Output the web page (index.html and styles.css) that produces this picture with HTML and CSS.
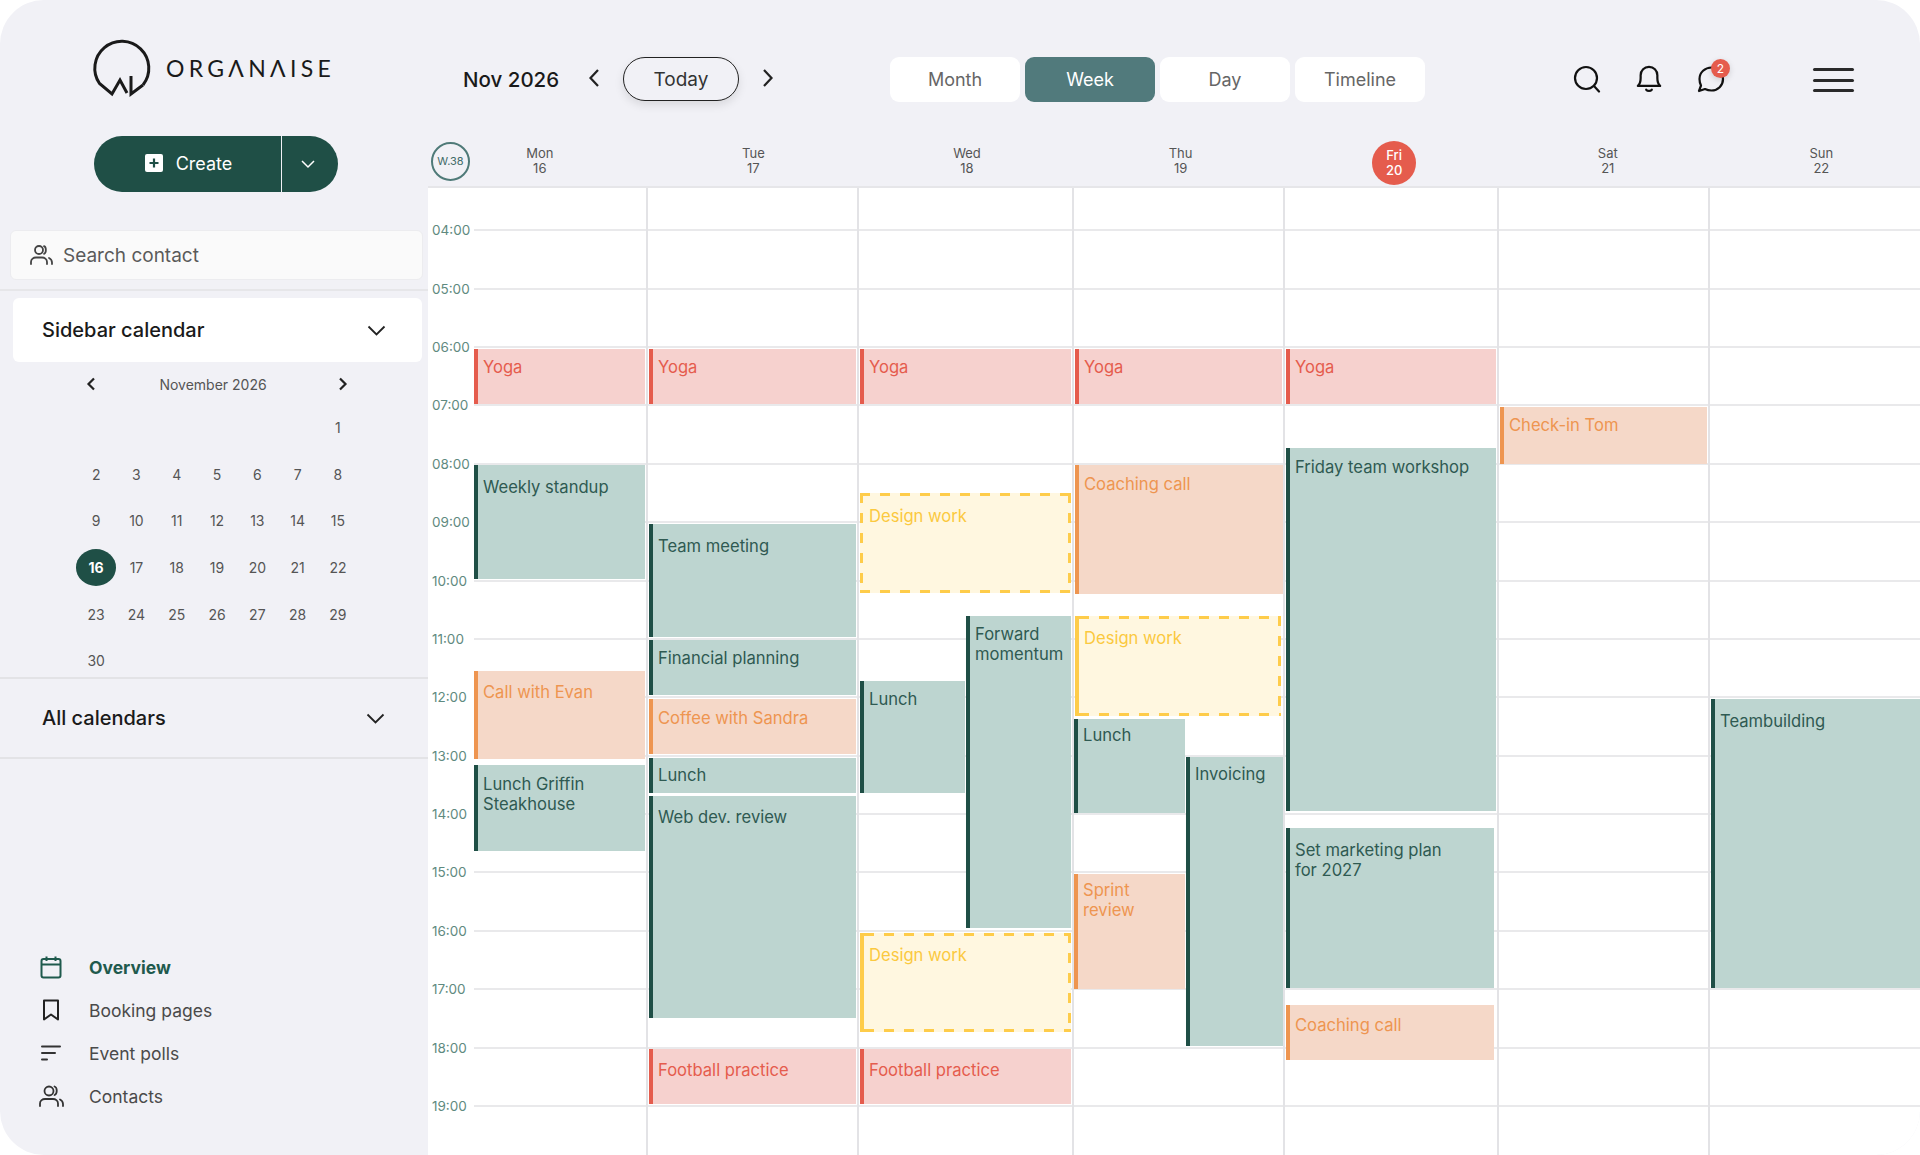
FILE: index.html
```html
<!DOCTYPE html>
<html>
<head>
<meta charset="utf-8"/>
<title>Organaise - Calendar</title>
<link rel="stylesheet" href="styles.css">
</head>
<body>
<div class="app">

	<!-- Left column -->
	<aside class="sidebar">
		<div class="logo">
			<svg class="logo-mark" width="60" height="60" viewBox="92 38 60 60" fill="none" stroke="#1a1a1a" stroke-width="3">
				<path d="M143 85 A27 27 0 1 0 99.500 83.500 L112 94 L120 80 L127 93"/>
				<path d="M131 76 L131 94 L143 85"/>
			</svg>
			<span class="logo-name" aria-label="Organaise">ORGΛNΛISE</span>
		</div>

		<div class="create">
			<button class="create-main">
				<svg width="18" height="18" viewBox="0 0 18 18"><rect width="18" height="18" rx="2" fill="#fff"/><path d="M9 4.500V13.500M4.500 9H13.500" stroke="#1f4f46" stroke-width="2.200"/></svg>
				Create
			</button>
			<button class="create-more">
				<svg width="16" height="10" viewBox="0 0 16 10" fill="none" stroke="#fff" stroke-width="1.500"><path d="M2 2L8 8L14 2"/></svg>
			</button>
		</div>

		<div class="search-wrap">
			<div class="search-contact">
				<svg width="24" height="22" viewBox="0 0 24 22" fill="none" stroke="#444" stroke-width="1.800" stroke-linecap="round"><circle cx="10" cy="6" r="4"/><path d="M2 20V18C2 15 4.500 13.500 7 13.500H13C15.500 13.500 18 15 18 18V20"/><path d="M15 2.200C17.500 3 17.500 9 15 9.800"/><path d="M20 14C22 15 23 16.500 23 18.500V20"/></svg>
				<span>Search contact</span>
			</div>
		</div>

		<div class="panel-card">
			<span>Sidebar calendar</span>
			<svg width="19" height="11" viewBox="0 0 19 11" fill="none" stroke="#222" stroke-width="1.800"><path d="M1.500 1.500L9.500 9.500L17.500 1.500"/></svg>
		</div>

		<div class="mini-cal">
			<div class="mini-head">
				<svg width="10" height="14" viewBox="0 0 10 14" fill="none" stroke="#222" stroke-width="2.200"><path d="M8 1.500L2.500 7L8 12.500"/></svg>
				<span>November 2026</span>
				<svg width="10" height="14" viewBox="0 0 10 14" fill="none" stroke="#222" stroke-width="2.200"><path d="M2 1.500L7.500 7L2 12.500"/></svg>
			</div>
			<div class="mini-days">
				<span></span><span></span><span></span><span></span><span></span><span></span><span>1</span>
				<span>2</span><span>3</span><span>4</span><span>5</span><span>6</span><span>7</span><span>8</span>
				<span>9</span><span>10</span><span>11</span><span>12</span><span>13</span><span>14</span><span>15</span>
				<span class="mini-today">16</span><span>17</span><span>18</span><span>19</span><span>20</span><span>21</span><span>22</span>
				<span>23</span><span>24</span><span>25</span><span>26</span><span>27</span><span>28</span><span>29</span>
				<span>30</span>
			</div>
		</div>

		<div class="panel-row">
			<span>All calendars</span>
			<svg width="19" height="11" viewBox="0 0 19 11" fill="none" stroke="#222" stroke-width="1.800"><path d="M1.500 1.500L9.500 9.500L17.500 1.500"/></svg>
		</div>

		<nav class="side-nav">
			<a class="side-link active">
				<svg width="24" height="24" viewBox="0 0 24 24" fill="none" stroke="#1f5a4d" stroke-width="2"><rect x="2.500" y="4" width="19" height="18.500" rx="2"/><path d="M2.500 9.500H21.500M7.500 1.500V6M16.500 1.500V6"/></svg>
				Overview
			</a>
			<a class="side-link">
				<svg width="24" height="24" viewBox="0 0 24 24" fill="none" stroke="#222" stroke-width="2" stroke-linejoin="round"><path d="M5 2.500H19V21.500L12 16.500L5 21.500Z"/></svg>
				Booking pages
			</a>
			<a class="side-link">
				<svg width="24" height="24" viewBox="0 0 24 24" fill="none" stroke="#333" stroke-width="2" stroke-linecap="round"><path d="M3 5.500H21M3 12H16M3 18.500H8"/></svg>
				Event polls
			</a>
			<a class="side-link">
				<svg width="26" height="24" viewBox="0 0 26 24" fill="none" stroke="#333" stroke-width="1.800" stroke-linecap="round"><circle cx="11" cy="7" r="4.500"/><path d="M2 22V19.500C2 16.500 4.500 15 7 15H15C17.500 15 20 16.500 20 19.500V22"/><path d="M16.500 2.500C19.500 3.500 19.500 10 16.500 11"/><path d="M22 15.500C24 16.500 25 18 25 20V22"/></svg>
				Contacts
			</a>
		</nav>
	</aside>

	<main class="main">
		<!-- Top bar -->
		<header class="topbar">
			<span class="month-title">Nov 2026</span>
			<svg class="nav-prev" width="14" height="20" viewBox="0 0 14 20" fill="none" stroke="#222" stroke-width="2.200"><path d="M11 2L3.500 10L11 18"/></svg>
			<button class="today">Today</button>
			<svg class="nav-next" width="14" height="20" viewBox="0 0 14 20" fill="none" stroke="#222" stroke-width="2.200"><path d="M3 2L10.500 10L3 18"/></svg>
			<div class="view-tabs">
				<button class="view-tab">Month</button>
				<button class="view-tab current">Week</button>
				<button class="view-tab">Day</button>
				<button class="view-tab">Timeline</button>
			</div>
			<div class="top-icons">
				<svg width="28" height="28" viewBox="0 0 28 28" fill="none" stroke="#111" stroke-width="2.200"><circle cx="13" cy="13" r="11"/><path d="M21 21L26 26.500" stroke-linecap="round"/></svg>
				<svg width="26" height="28" viewBox="0 0 28 30" fill="none" stroke="#111" stroke-width="2.400" stroke-linejoin="round"><path d="M2 22.500C4.500 20.500 5 18 5 14V11C5 5.500 9 2 14 2S23 5.500 23 11V14C23 18 23.500 20.500 26 22.500Z"/><path d="M11 26.500C12.500 28.300 15.500 28.300 17 26.500" stroke-linecap="round"/></svg>
				<div class="chat">
					<svg width="28" height="28" viewBox="0 0 28 28" fill="none" stroke="#111" stroke-width="2.200" stroke-linejoin="round"><path d="M14.500 2.500C21 2.500 26 7.500 26 14S21 25.500 14.500 25.500C12 25.500 10 25 8 24L2 26L4 20.500C3 18.500 2.500 16.500 2.500 14C2.500 7.500 8 2.500 14.500 2.500Z"/></svg>
					<span class="chat-badge">2</span>
				</div>
			</div>
			<div class="burger"><i></i><i></i><i></i></div>
		</header>

		<!-- Day names -->
		<div class="week-head">
			<span class="week-no">W.38</span>
			<div class="head-day">Mon<br>16</div>
			<div class="head-day">Tue<br>17</div>
			<div class="head-day">Wed<br>18</div>
			<div class="head-day">Thu<br>19</div>
			<div class="head-day today-col"><b>Fri<br>20</b></div>
			<div class="head-day">Sat<br>21</div>
			<div class="head-day">Sun<br>22</div>
		</div>

		<!-- Time grid -->
		<div class="grid">
			<div class="hours">
				<div class="hour"><span>04:00</span></div>
				<div class="hour"><span>05:00</span></div>
				<div class="hour"><span>06:00</span></div>
				<div class="hour"><span>07:00</span></div>
				<div class="hour"><span>08:00</span></div>
				<div class="hour"><span>09:00</span></div>
				<div class="hour"><span>10:00</span></div>
				<div class="hour"><span>11:00</span></div>
				<div class="hour"><span>12:00</span></div>
				<div class="hour"><span>13:00</span></div>
				<div class="hour"><span>14:00</span></div>
				<div class="hour"><span>15:00</span></div>
				<div class="hour"><span>16:00</span></div>
				<div class="hour"><span>17:00</span></div>
				<div class="hour"><span>18:00</span></div>
				<div class="hour"><span>19:00</span></div>
			</div>

			<div class="days">
				<div class="day">
					<div class="event red" style="top:161px;height:55px;padding-top:8px;left:0">Yoga</div>
					<div class="event teal" style="top:277px;height:114px;padding-top:12px;left:0">Weekly standup</div>
					<div class="event orange" style="top:483px;height:88px;padding-top:11px;left:0">Call with Evan</div>
					<div class="event teal" style="top:577px;height:86px;padding-top:9px;left:0">Lunch Griffin<br>Steakhouse</div>
				</div>
				<div class="day">
					<div class="event red" style="top:161px;height:55px;padding-top:8px">Yoga</div>
					<div class="event teal" style="top:336px;height:113px;padding-top:12px">Team meeting</div>
					<div class="event teal" style="top:452px;height:55px;padding-top:8px">Financial planning</div>
					<div class="event orange" style="top:511px;height:55px;padding-top:9px">Coffee with Sandra</div>
					<div class="event teal" style="top:570px;height:35px;padding-top:7px">Lunch</div>
					<div class="event teal" style="top:608px;height:222px;padding-top:11px">Web dev. review</div>
					<div class="event red" style="top:861px;height:55px;padding-top:11px">Football practice</div>
				</div>
				<div class="day">
					<div class="event red" style="top:161px;height:55px;padding-top:8px">Yoga</div>
					<div class="event yellow open" style="top:305px;height:100px;padding-top:13px">Design work</div>
					<div class="event teal" style="top:493px;height:112px;padding-top:8px;width:105px">Lunch</div>
					<div class="event teal" style="top:428px;height:312px;padding-top:8px;left:107px">Forward momentum</div>
					<div class="event yellow" style="top:745px;height:99px;padding-top:12px">Design work</div>
					<div class="event red" style="top:861px;height:55px;padding-top:11px">Football practice</div>
				</div>
				<div class="day">
					<div class="event red" style="top:161px;height:55px;padding-top:8px">Yoga</div>
					<div class="event orange" style="top:277px;height:129px;padding-top:9px;right:0">Coaching call</div>
					<div class="event yellow" style="top:428px;height:100px;padding-top:12px;right:2px">Design work</div>
					<div class="event teal" style="top:531px;height:94px;padding-top:6px;left:0;width:111px">Lunch</div>
					<div class="event teal" style="top:569px;height:289px;padding-top:7px;left:112px;right:0">Invoicing</div>
					<div class="event orange" style="top:686px;height:115px;padding-top:6px;left:0;width:111px">Sprint<br>review</div>
				</div>
				<div class="day">
					<div class="event red" style="top:161px;height:55px;padding-top:8px">Yoga</div>
					<div class="event teal" style="top:260px;height:363px;padding-top:9px">Friday team workshop</div>
					<div class="event teal" style="top:640px;height:160px;padding-top:12px;right:3px">Set marketing plan<br>for 2027</div>
					<div class="event orange" style="top:817px;height:55px;padding-top:10px;right:3px">Coaching call</div>
				</div>
				<div class="day">
					<div class="event orange" style="top:219px;height:57px;padding-top:8px">Check-in Tom</div>
				</div>
				<div class="day">
					<div class="event teal" style="top:511px;height:289px;padding-top:12px;right:0">Teambuilding</div>
				</div>
			</div>
		</div>
	</main>
</div>
</body>
</html>
```
FILE: styles.css
```css
* {
box-sizing: border-box;
}
html, body {
margin: 0;
height: 100%;
background: #fff;
overflow: hidden;
}
body {
font-family: Inter, "Liberation Sans", sans-serif;
color: #222;
}
button {
font-family: inherit;
border: none;
cursor: pointer;
}
.app {
display: flex;
height: 1155px;
background: #f1f1f6;
border-radius: 44px;
overflow: hidden;
}

/* Sidebar */
.sidebar {
width: 428px;
flex: none;
display: flex;
flex-direction: column;
}
.logo {
display: flex;
align-items: center;
height: 60px;
margin-top: 38px;
margin-left: 92px;
}
.logo-name {
margin-left: 14px;
font-family: Lato, sans-serif;
font-size: 23px;
letter-spacing: 4.300px;
color: #1a1a1a;
}
.create {
display: flex;
width: 244px;
height: 56px;
margin-top: 38px;
margin-left: 94px;
}
.create-main {
width: 187px;
display: flex;
align-items: center;
justify-content: center;
gap: 13px;
padding-left: 8px;
padding-bottom: 3px;
background: #1f4f46;
color: #fff;
font-size: 18px;
border-radius: 28px 0 0 28px;
}
.create-more {
flex: 1;
margin-left: 1px;
padding-right: 10px;
background: #1f4f46;
border-radius: 0 28px 28px 0;
}
.search-wrap {
margin-top: 38px;
padding: 0 5px 9px 10px;
border-bottom: 2px solid #e6e6e9;
}
.search-contact {
display: flex;
align-items: center;
gap: 10px;
height: 50px;
padding-left: 18px;
background: #fafafa;
border: 1px solid #ececef;
border-radius: 6px;
font-size: 19px;
color: #5a5a5a;
}
.panel-card {
display: flex;
align-items: center;
justify-content: space-between;
height: 64px;
margin: 7px 6px 0 13px;
padding: 0 36px 0 29px;
background: #fff;
font-size: 20px;
font-weight: 500;
color: #1a1a1a;
border-radius: 6px;
}
.mini-cal {
height: 315px;
}
.mini-head {
display: flex;
align-items: center;
justify-content: space-between;
width: 262px;
margin-left: 86px;
margin-top: 14px;
height: 16px;
font-size: 14px;
color: #555;
}
.mini-head span {
margin-right: 8px;
}
.mini-days {
display: grid;
grid-template-columns: repeat(7, 40.300px);
grid-auto-rows: 46.700px;
margin-top: 12px;
margin-left: 76px;
font-size: 14px;
color: #555;
}
.mini-days span {
display: flex;
align-items: center;
justify-content: center;
}
.mini-today {
background: #1f4f46;
color: #fff;
font-weight: 700;
border-radius: 50%;
height: 37px;
align-self: center;
}
.panel-row {
display: flex;
align-items: center;
justify-content: space-between;
height: 82px;
padding: 0 43px 0 42px;
border-top: 2px solid #e3e3e6;
border-bottom: 2px solid #e3e3e6;
font-size: 20px;
font-weight: 500;
color: #1a1a1a;
}
.side-nav {
margin-top: auto;
padding-bottom: 46px;
padding-left: 38px;
display: flex;
flex-direction: column;
gap: 17px;
}
.side-link {
display: flex;
align-items: center;
gap: 25px;
height: 26px;
font-size: 17.500px;
color: #4a4a4a;
}
.side-link svg {
width: 26px;
flex: none;
}
.side-link.active {
color: #1f5a4d;
font-weight: 700;
}

/* Top bar */
.main {
flex: 1;
min-width: 0;
display: flex;
flex-direction: column;
}
.topbar {
display: flex;
align-items: center;
height: 130px;
padding: 28px 0 0 35px;
}
.month-title {
width: 95px;
font-size: 20.500px;
font-weight: 500;
color: #1a1a1a;
white-space: nowrap;
}
.nav-prev {
margin-left: 29px;
margin-top: -3px;
}
.today {
width: 116px;
height: 44px;
margin-left: 22px;
background: #f1f1f6;
border: 1.500px solid #222;
border-radius: 22px;
font-size: 19px;
color: #333;
box-shadow: 0 4px 10px rgba(0, 0, 0, 0.1);
}
.nav-next {
margin-left: 22px;
margin-top: -3px;
}
.view-tabs {
display: flex;
gap: 5px;
margin-left: 115px;
}
.view-tab {
width: 130px;
height: 45px;
background: #fff;
border-radius: 9px;
font-size: 18px;
color: #666;
}
.view-tab.current {
background: #517a7c;
color: #fff;
}
.top-icons {
display: flex;
align-items: center;
gap: 35px;
margin-left: 148px;
}
.chat {
position: relative;
height: 28px;
}
.chat-badge {
position: absolute;
top: -6px;
left: 14px;
width: 19px;
height: 19px;
border-radius: 50%;
background: #e55c4d;
color: #fff;
font-size: 12px;
line-height: 19px;
text-align: center;
box-shadow: 0 2px 6px rgba(0, 0, 0, 0.15);
}
.burger {
display: flex;
flex-direction: column;
gap: 7.800px;
width: 41px;
margin-left: 88px;
margin-top: 2px;
}
.burger i {
height: 3px;
border-radius: 2px;
background: #2a2a2a;
}

/* Day names */
.week-head {
position: relative;
display: grid;
grid-template-columns: repeat(7, 213.600px);
height: 58px;
padding-left: 5px;
padding-top: 16px;
border-bottom: 2px solid #e6e6e9;
}
.week-no {
position: absolute;
left: 3px;
top: 12px;
width: 39px;
height: 39px;
border: 2px solid #4f7a78;
border-radius: 50%;
font-size: 11px;
line-height: 35px;
text-align: center;
color: #3f6a68;
}
.head-day {
text-align: center;
font-size: 13px;
line-height: 15px;
color: #555;
}
.today-col b {
display: block;
width: 44px;
height: 44px;
margin: -5px auto 0;
padding-top: 7px;
border-radius: 50%;
background: #e55c4d;
color: #fff;
font-weight: 500;
}

/* Time grid */
.grid {
position: relative;
flex: 1;
background: #fff;
overflow: hidden;
}
.hours {
padding-top: 13px;
}
.hour {
display: flex;
align-items: center;
height: 58.400px;
}
.hour span {
width: 46px;
flex: none;
padding-left: 4px;
font-size: 13.500px;
color: #5f8a80;
}
.hour::after {
content: "";
flex: 1;
height: 2px;
background: #e9e9eb;
}
.days {
position: absolute;
top: 0;
left: 46px;
right: 0;
bottom: 0;
display: grid;
grid-template-columns: 172px 211px 215px 211px 214px 211px 1fr;
}
.day {
position: relative;
border-left: 2px solid #e3e3e6;
}
.day:first-child {
border-left: none;
}
.event {
position: absolute;
left: 1px;
right: 1px;
padding-left: 5px;
border-left: 4px solid;
font-size: 16.600px;
line-height: 20px;
}
.event.teal {
background: #bdd5d0;
border-color: #1f4f46;
color: #2f5a52;
}
.event.red {
background: #f6d1ce;
border-color: #e55c4d;
color: #e55c4d;
}
.event.orange {
background: #f5d8c8;
border-color: #ee9550;
color: #ee9550;
}
/* dashes drawn by hand, a dashed border comes out too short */
.event.yellow {
background-color: #fff7e0;
background-image:
	repeating-linear-gradient(90deg, #fecc4a 0 10px, transparent 10px 20px),
	repeating-linear-gradient(90deg, #fecc4a 0 10px, transparent 10px 20px),
	repeating-linear-gradient(180deg, #fecc4a 0 10px, transparent 10px 20px);
background-size: 100% 3px, 100% 3px, 3px 100%;
background-position: 0 0, 0 100%, 100% 0;
background-repeat: no-repeat;
border-color: #fecc4a;
color: #fbc93f;
}
.event.yellow.open {
border-left: none;
padding-left: 9px;
background-image:
	repeating-linear-gradient(90deg, #fecc4a 0 10px, transparent 10px 20px),
	repeating-linear-gradient(90deg, #fecc4a 0 10px, transparent 10px 20px),
	repeating-linear-gradient(180deg, #fecc4a 0 10px, transparent 10px 20px),
	repeating-linear-gradient(180deg, #fecc4a 0 10px, transparent 10px 20px);
background-size: 100% 3px, 100% 3px, 3px 100%, 3px 100%;
background-position: 0 0, 0 100%, 100% 0, 0 0;
}
```
